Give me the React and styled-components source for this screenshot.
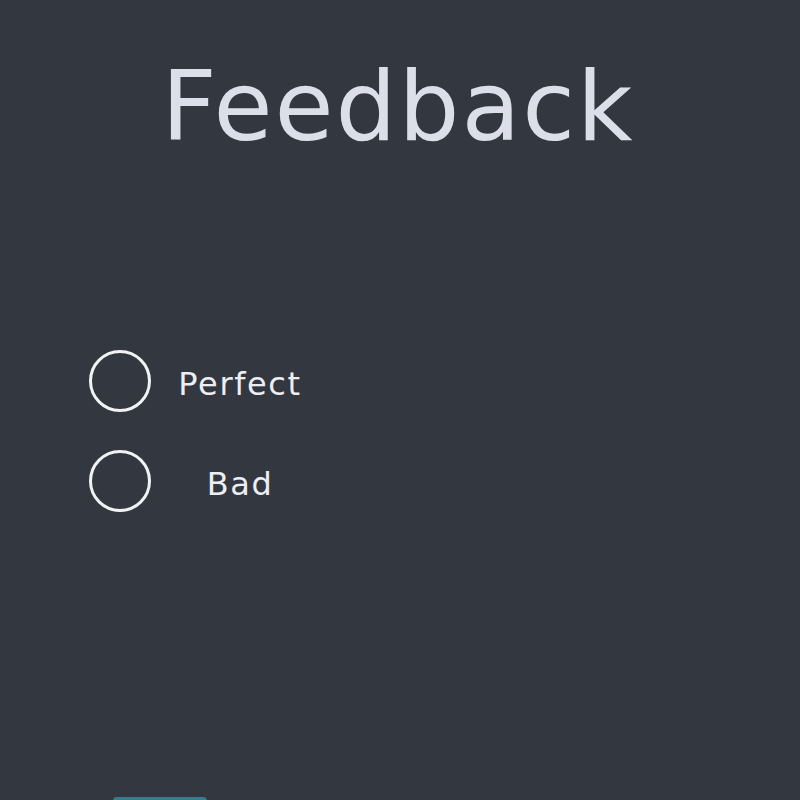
import React, { useState } from "react";
import styled, { createGlobalStyle } from "styled-components";

const Global = createGlobalStyle`
  html, body {
    margin: 0;
    padding: 0;
    background: #333740;
    height: 100%;
    overflow: hidden;
  }
  body {
    font-family: "DejaVu Sans", "Noto Sans", sans-serif;
  }
`;

const Page = styled.main`
  width: 800px;
  height: 800px;
  display: flex;
  flex-direction: column;
  background: #333740;
  overflow: hidden;
`;

const Title = styled.h1`
  margin: 0;
  padding-top: 48px;
  padding-right: 4px;
  text-align: center;
  font-family: "DejaVu Sans", "Noto Sans", sans-serif;
  font-weight: 400;
  font-size: 96px;
  line-height: 118px;
  letter-spacing: 2px;
  color: #dcdfe9;
`;

const Options = styled.div`
  display: flex;
  flex-direction: column;
  gap: 38px;
  margin-top: 184px;
  padding-left: 89px;
`;

const Option = styled.label`
  display: flex;
  align-items: center;
  cursor: pointer;
`;

const Circle = styled.span`
  box-sizing: border-box;
  width: 62px;
  height: 62px;
  border-radius: 50%;
  border: 3px solid #f1f2f4;
  display: flex;
  align-items: center;
  justify-content: center;
  &::after {
    content: "";
    width: 30px;
    height: 30px;
    border-radius: 50%;
    background: ${(p) => (p.$checked ? "#f1f2f4" : "transparent")};
  }
`;

const Label = styled.span`
  width: 150px;
  margin-left: 14px;
  padding-top: 5px;
  text-align: center;
  font-family: "DejaVu Sans", "Noto Sans", sans-serif;
  font-size: 32px;
  letter-spacing: 1.6px;
  color: #eceef3;
`;

const Submit = styled.button`
  margin-top: auto;
  margin-left: 113px;
  width: 94px;
  height: 40px;
  transform: translateY(37px);
  border: none;
  border-radius: 4px;
  background: #3c7a8e;
  color: transparent;
  font-size: 0;
`;

const choices = ["Perfect", "Bad"];

export default function App() {
  const [value, setValue] = useState(null);
  return (
    <Page>
      <Global />
      <Title>Feedback</Title>
      <Options>
        {choices.map((c) => (
          <Option key={c} onClick={() => setValue(c)}>
            <Circle $checked={value === c} />
            <Label>{c}</Label>
          </Option>
        ))}
      </Options>
      <Submit aria-label="Send" />
    </Page>
  );
}
